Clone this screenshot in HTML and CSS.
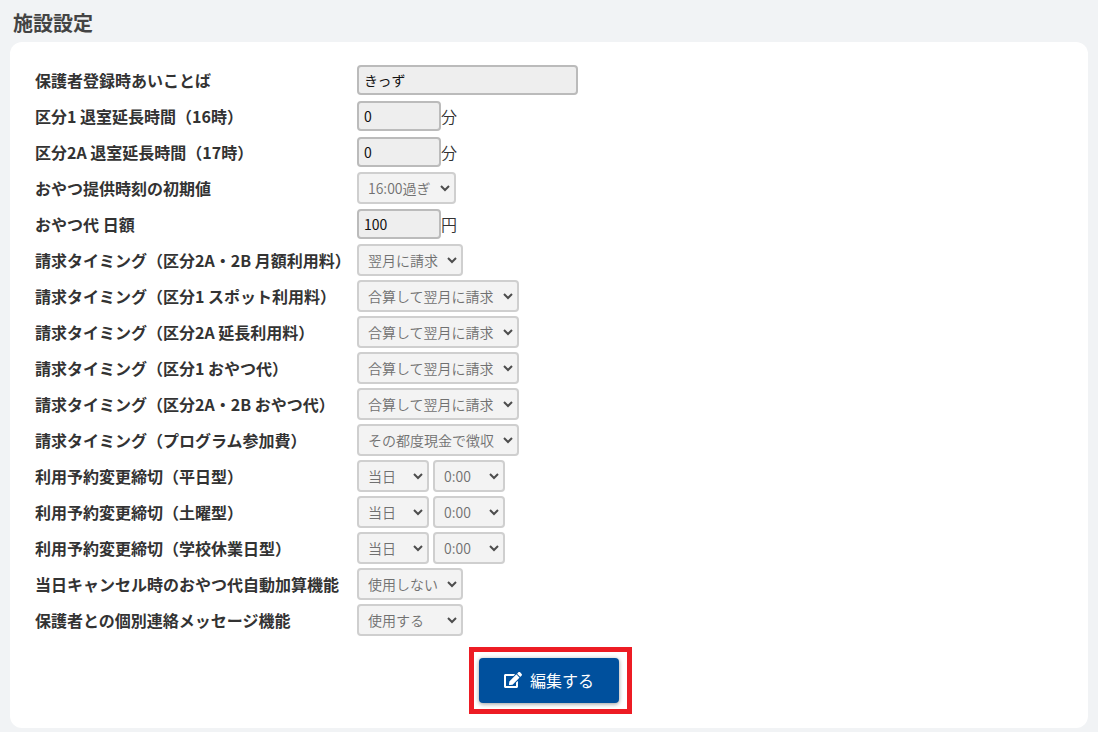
FILE: index.html
```html
<!DOCTYPE html>
<html lang="ja">
<head>
<meta charset="utf-8">
<meta name="viewport" content="width=device-width, initial-scale=1">
<title>施設設定</title>
<link rel="stylesheet" href="styles.css">
</head>
<body>
<h1 class="page-title">施設設定</h1>
<main class="card">
<form>
<div class="settings">
<div class="row"><label class="name" for="password">保護者登録時あいことば</label><div class="value"><input class="box box-text" id="password" type="text" value="きっず" readonly></div></div>
<div class="row"><label class="name" for="ext1">区分1 退室延長時間（16時）</label><div class="value"><input class="box box-number" id="ext1" type="text" value="0" readonly><span class="unit">分</span></div></div>
<div class="row"><label class="name" for="ext2">区分2A 退室延長時間（17時）</label><div class="value"><input class="box box-number" id="ext2" type="text" value="0" readonly><span class="unit">分</span></div></div>
<div class="row"><label class="name" for="snack-time">おやつ提供時刻の初期値</label><div class="value"><select class="pick" id="snack-time" disabled><option>16:00過ぎ</option></select></div></div>
<div class="row"><label class="name" for="snack-fee">おやつ代 日額</label><div class="value"><input class="box box-number" id="snack-fee" type="text" value="100" readonly><span class="unit">円</span></div></div>
<div class="row"><label class="name" for="bill1">請求タイミング（区分2A・2B 月額利用料）</label><div class="value"><select class="pick" id="bill1" disabled><option>翌月に請求</option></select></div></div>
<div class="row"><label class="name" for="bill2">請求タイミング（区分1 スポット利用料）</label><div class="value"><select class="pick" id="bill2" disabled><option>合算して翌月に請求</option></select></div></div>
<div class="row"><label class="name" for="bill3">請求タイミング（区分2A 延長利用料）</label><div class="value"><select class="pick" id="bill3" disabled><option>合算して翌月に請求</option></select></div></div>
<div class="row"><label class="name" for="bill4">請求タイミング（区分1 おやつ代）</label><div class="value"><select class="pick" id="bill4" disabled><option>合算して翌月に請求</option></select></div></div>
<div class="row"><label class="name" for="bill5">請求タイミング（区分2A・2B おやつ代）</label><div class="value"><select class="pick" id="bill5" disabled><option>合算して翌月に請求</option></select></div></div>
<div class="row"><label class="name" for="bill6">請求タイミング（プログラム参加費）</label><div class="value"><select class="pick" id="bill6" disabled><option>その都度現金で徴収</option></select></div></div>
<div class="row"><label class="name" for="limit1">利用予約変更締切（平日型）</label><div class="value value-pair"><select class="pick pick-short" id="limit1" disabled><option>当日</option></select><select class="pick pick-short" aria-label="平日型 締切時刻" disabled><option>0:00</option></select></div></div>
<div class="row"><label class="name" for="limit2">利用予約変更締切（土曜型）</label><div class="value value-pair"><select class="pick pick-short" id="limit2" disabled><option>当日</option></select><select class="pick pick-short" aria-label="土曜型 締切時刻" disabled><option>0:00</option></select></div></div>
<div class="row"><label class="name" for="limit3">利用予約変更締切（学校休業日型）</label><div class="value value-pair"><select class="pick pick-short" id="limit3" disabled><option>当日</option></select><select class="pick pick-short" aria-label="学校休業日型 締切時刻" disabled><option>0:00</option></select></div></div>
<div class="row"><label class="name" for="cancel">当日キャンセル時のおやつ代自動加算機能</label><div class="value"><select class="pick" id="cancel" disabled><option>使用しない</option></select></div></div>
<div class="row"><label class="name" for="message">保護者との個別連絡メッセージ機能</label><div class="value"><select class="pick" id="message" disabled><option selected>使用する</option><option>使用しない</option></select></div></div>
</div>
<div class="actions">
<div class="highlight">
<button class="edit" type="button">
<svg class="edit-icon" viewBox="0 0 576 512" aria-hidden="true"><path fill="currentColor" d="M402.600 83.200l90.200 90.200c3.800 3.800 3.800 10 0 13.800L274.400 405.600l-92.800 10.300c-12.400 1.400-22.900-9.100-21.500-21.500l10.300-92.800L388.800 83.200c3.800-3.800 10-3.800 13.800 0zm162-22.900l-48.800-48.800c-15.200-15.200-39.900-15.200-55.200 0l-35.400 35.400c-3.800 3.800-3.800 10 0 13.800l90.200 90.200c3.800 3.800 10 3.800 13.800 0l35.400-35.400c15.200-15.300 15.200-40 0-55.200zM384 346.200V448H64V128h229.800c3.200 0 6.200-1.300 8.500-3.500l40-40c7.600-7.600 2.200-20.500-8.500-20.500H48C21.500 64 0 85.500 0 112v352c0 26.500 21.500 48 48 48h352c26.500 0 48-21.500 48-48V306.200c0-10.700-12.900-16-20.500-8.500l-40 40c-2.200 2.300-3.500 5.300-3.500 8.500z"/></svg>
<span>編集する</span>
</button>
</div>
</div>
</form>
</main>
</body>
</html>
```

FILE: styles.css
```css
* {
  box-sizing: border-box;
}

body {
  margin: 0;
  padding: 4px 10px;
  background: #f1f3f5;
  color: #333;
  font-family: "Noto Sans CJK JP", sans-serif;
  font-size: 16px;
}

.page-title {
  margin: 0;
  padding: 0 3px;
  color: #444;
  font-size: 20px;
  line-height: 38px;
}

.card {
  padding: 20px 25px 25px;
  border-radius: 12px;
  background: #fff;
}

.row {
  display: grid;
  grid-template-columns: 322px 1fr;
  align-items: center;
  height: 36px;
}

.name {
  font-weight: 700;
  white-space: nowrap;
}

.value {
  display: flex;
  align-items: center;
}

.value-pair {
  gap: 4px;
}

.box {
  height: 30px;
  padding: 0 5px;
  border: 2px solid #bbb;
  border-radius: 4px;
  background: #eee;
  color: #111;
  font-family: inherit;
  font-size: 14px;
}

.box-text {
  width: 221px;
}

.box-number {
  width: 84px;
}

.unit {
  font-weight: 350;
  line-height: 24px;
}

.pick {
  height: 32px;
  padding: 0 23px 0 9px;
  border: 2px solid #cfcfcf;
  border-radius: 4px;
  appearance: none;
  background: #f3f3f3 url("data:image/svg+xml,%3Csvg xmlns='http://www.w3.org/2000/svg' viewBox='0 0 10 7'%3E%3Cpath d='M1 1l4 4 4-4' fill='none' stroke='%234d4d4d' stroke-width='2'/%3E%3C/svg%3E") no-repeat right 4px center / 10px 7px;
  color: #707070;
  font-family: inherit;
  font-size: 14px;
  font-weight: 350;
  opacity: 1;
}

.pick-short {
  width: 72px;
}

.actions {
  display: flex;
  justify-content: center;
  padding-top: 20px;
}

.highlight {
  position: relative;
}

/* Frame drawn around the edit button */
.highlight::before {
  content: "";
  position: absolute;
  inset: -11px -13px -11px -10px;
  border: 5px solid #ed1c24;
  pointer-events: none;
}

.edit {
  display: flex;
  align-items: center;
  justify-content: center;
  gap: 8px;
  width: 140px;
  height: 45px;
  padding: 0 0 2px;
  border: 0;
  border-radius: 4px;
  background: #00509d;
  box-shadow: 0 1px 4px rgba(0, 0, 0, 0.4);
  color: #fff;
  font-family: inherit;
  font-size: 16px;
}

.edit-icon {
  width: 18px;
  height: 16px;
}
```
